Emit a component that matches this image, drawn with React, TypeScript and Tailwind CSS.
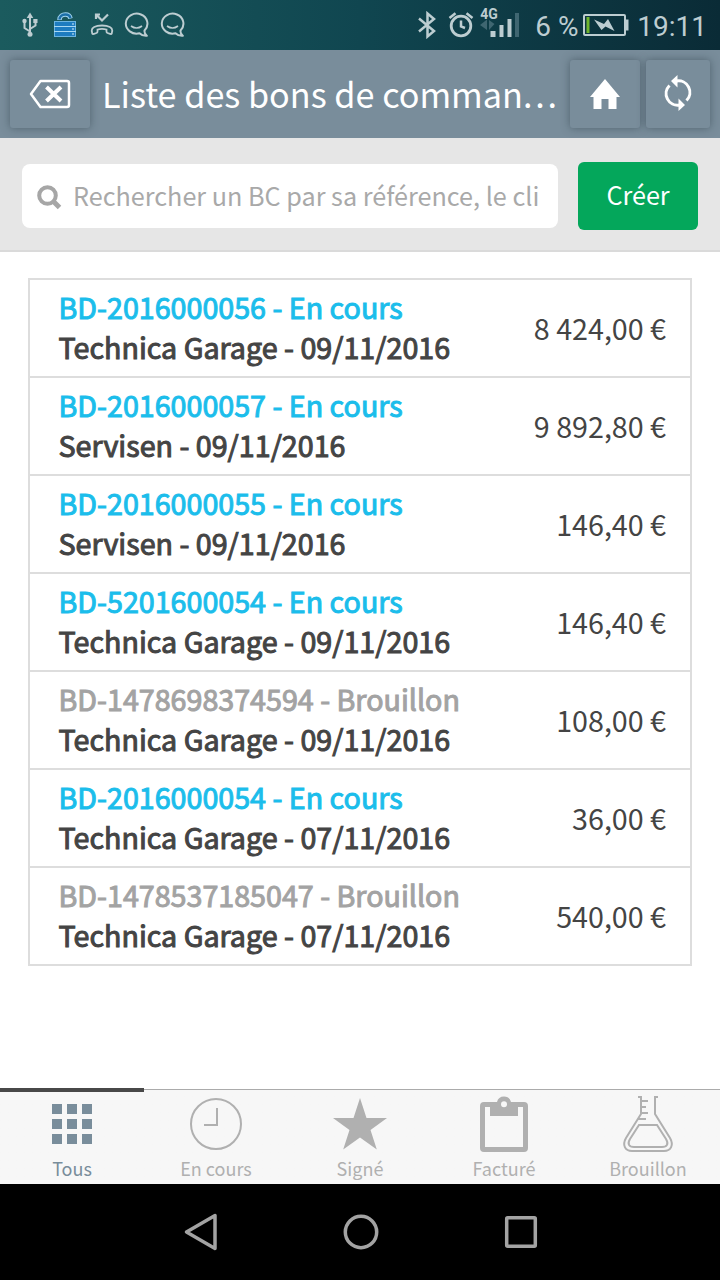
import { useState } from 'react';
import type { ReactNode } from 'react';

const orders = [
  { ref: 'BD-2016000056', status: 'En cours', client: 'Technica Garage', date: '09/11/2016', amount: '8 424,00 €' },
  { ref: 'BD-2016000057', status: 'En cours', client: 'Servisen', date: '09/11/2016', amount: '9 892,80 €' },
  { ref: 'BD-2016000055', status: 'En cours', client: 'Servisen', date: '09/11/2016', amount: '146,40 €' },
  { ref: 'BD-5201600054', status: 'En cours', client: 'Technica Garage', date: '09/11/2016', amount: '146,40 €' },
  { ref: 'BD-1478698374594', status: 'Brouillon', client: 'Technica Garage', date: '09/11/2016', amount: '108,00 €' },
  { ref: 'BD-2016000054', status: 'En cours', client: 'Technica Garage', date: '07/11/2016', amount: '36,00 €' },
  { ref: 'BD-1478537185047', status: 'Brouillon', client: 'Technica Garage', date: '07/11/2016', amount: '540,00 €' },
];

const ChatIcon = () => (
  <svg width="26" height="26" viewBox="0 0 26 26" fill="none" stroke="currentColor" strokeWidth="2">
    <path d="M15.500 21.300A10.800 10 0 1 1 20.500 18.500C20.300 20.500 21 22.300 22.800 23.800C20 24 17.500 23.300 15.500 21.300Z" strokeLinejoin="round" />
    <path d="M7 14Q12.500 18 18 14" strokeWidth="1.600" />
  </svg>
);

function StatusBar() {
  return (
    <div className="h-[50px] shrink-0 flex items-center justify-between pl-[22px] pr-[13px] bg-linear-to-r from-[#1b5b5e] via-[#104650] to-[#0a2b36] text-[#bdcdd1] font-['Roboto',sans-serif]">
      <div className="flex items-center gap-[10px]">
        <svg width="16" height="26" viewBox="0 0 16 26" fill="none" stroke="currentColor" strokeWidth="2">
          <path d="M8 3V22M8 19.500L2.500 16V10M8 17L13.500 13.500V9" />
          <path d="M8 0.500L11.300 6H4.700Z" fill="currentColor" stroke="none" />
          <circle cx="8" cy="22.300" r="2.500" fill="currentColor" stroke="none" />
          <circle cx="2.500" cy="9" r="2.200" fill="currentColor" stroke="none" />
          <path d="M11.300 7H15.500V11H11.300Z" fill="currentColor" stroke="none" />
        </svg>
        <svg className="ml-[5px]" width="24" height="26" viewBox="0 0 24 26" fill="none">
          <path d="M6.500 8C6.500 4 9.500 2.500 12.500 2.500C15 2.500 17 4 17.500 6.500" stroke="#9fd3ef" strokeWidth="4.500" />
          <path d="M6.500 7.600C6.500 4 9.500 2.500 12.500 2.500C15 2.500 17 4 17.400 6" stroke="#1c6fa8" strokeWidth="2.500" />
          <rect x="1.500" y="9.500" width="21" height="15" fill="#1d7cc0" stroke="#6cb4e0" />
          <path d="M1 14.500H23M1 19.500H23" stroke="#a8d8f2" strokeWidth="1.200" />
          <path d="M19 12H21M19 17H21M19 22H21" stroke="#d6edf8" />
        </svg>
        <svg className="ml-[3px]" width="24" height="26" viewBox="0 0 24 26" fill="none" stroke="currentColor" strokeWidth="2.200">
          <path d="M6 2.500L12 8.500L18 2.500M6 7V2.500H10" />
          <path d="M2 20C0.500 15.500 6 13.500 12 13.500S23.500 15.500 22 20C21.800 22.500 21.500 22.200 20 21.800L17.500 21C16 20.500 16.500 19 16.500 17.500C13.500 16.600 10.500 16.600 7.500 17.500C7.500 19 8 20.500 6.500 21L4 21.800C2.500 22.200 2.200 22.500 2 20Z" strokeWidth="1.800" />
        </svg>
        <ChatIcon />
        <ChatIcon />
      </div>

      <div className="flex items-center">
        <svg width="20" height="28" viewBox="0 0 20 28" fill="none" stroke="currentColor" strokeWidth="2.500">
          <path d="M2 7.500L17 20L10.500 25.500V2.500L17 8L2 20.500" />
        </svg>
        <svg className="ml-[11px]" width="26" height="28" viewBox="0 0 26 28" fill="none" stroke="currentColor">
          <circle cx="13" cy="15" r="9.800" strokeWidth="2.800" />
          <path d="M13 9.500V15.500L17 17M1.500 7L7.500 2.200M24.500 7L18.500 2.200" strokeWidth="2.500" />
        </svg>
        <div className="ml-[4px] mr-[2px] w-[42px] h-[34px] relative">
          <svg width="42" height="34" viewBox="0 0 42 34">
            <path d="M12.500 29H17.500V23H12.500ZM21.500 29H25.500V17H21.500ZM29.500 29H33.500V11H29.500Z" fill="currentColor" />
            <path d="M37 29H41V5H37Z" fill="#3f6671" />
            <path d="M2 17L9 11.500V22ZM11 12V22L16.500 16Z" fill="#3f6671" />
          </svg>
          <span className="absolute left-[2px] top-[-1px] text-[14px] leading-[14px] font-bold">4G</span>
        </div>
        <span className="ml-[13px] w-[48px] whitespace-nowrap text-[28px] leading-8 pt-[3px]">6 %</span>
        <svg width="46" height="24" viewBox="0 0 46 24" fill="none">
          <rect x="1" y="2" width="41" height="20" rx="1" stroke="currentColor" strokeWidth="2" />
          <path d="M43 6.500H45.500V17.500H43Z" fill="currentColor" />
          <path d="M3.500 4H6.500V20H3.500Z" fill="#6fb52c" />
          <path d="M11 6.500L21 11L25 6L31.500 18L22.500 13.500L18.500 17Z" fill="currentColor" />
        </svg>
        <span className="ml-[8px] text-[28px] leading-8 pt-[3px]">19:11</span>
      </div>
    </div>
  );
}

function HeaderButton({ className, children }: { className: string; children: ReactNode }) {
  return (
    <button className={`h-[68px] shrink-0 rounded-[3px] bg-[#798d9b] shadow-[0_0_9px_rgba(40,55,65,0.5)] flex items-center justify-center ${className}`}>
      {children}
    </button>
  );
}

function Header() {
  return (
    <header className="h-[88px] shrink-0 bg-[#798d9b] flex items-center px-[10px] text-white">
      <HeaderButton className="w-[80px]">
        <svg className="-mt-px" width="42" height="30" viewBox="0 0 42 30" fill="none" stroke="currentColor" strokeWidth="2.500">
          <path d="M11.500 2H38Q40 2 40 4V26Q40 28 38 28H11.500L2 15Z" strokeLinejoin="round" />
          <path d="M17.500 8L32 22M32 8L17.500 22" strokeWidth="4" />
        </svg>
      </HeaderButton>
      <h1 className="ml-[12px] flex-1 min-w-0 -mt-[2px] whitespace-nowrap text-[34.200px] leading-[68px]">
        Liste des bons de comman<span className="tracking-[2.800px]">...</span>
      </h1>
      <HeaderButton className="w-[70px]">
        <svg className="-mt-px" width="30" height="30" viewBox="0 0 30 30" fill="currentColor">
          <path d="M15 0L30 18H26.500V30H18.500V20H11.500V30H3.500V18H0Z" />
        </svg>
      </HeaderButton>
      <HeaderButton className="w-[64px] ml-[6px]">
        <svg className="-mt-[2px]" width="28" height="36" viewBox="0 0 28 36" fill="none" stroke="currentColor" strokeWidth="3">
          <path d="M5.500 10.500A11.500 11.500 0 0 0 15.500 30M22.500 25.500A11.500 11.500 0 0 0 12.500 6" />
          <path d="M13.500 0V12.500L7 6ZM14.500 23.500V36L21 30Z" fill="currentColor" stroke="none" />
        </svg>
      </HeaderButton>
    </header>
  );
}

const tabs = [
  {
    label: 'Tous',
    icon: (
      <svg width="56" height="56" viewBox="0 0 56 56" fill="currentColor">
        <path d="M8 8h10v10H8zM23 8h10v10H23zM38 8h10v10H38zM8 23h10v10H8zM23 23h10v10H23zM38 23h10v10H38zM8 38h10v10H8zM23 38h10v10H23zM38 38h10v10H38z" />
      </svg>
    ),
  },
  {
    label: 'En cours',
    icon: (
      <svg width="56" height="56" viewBox="0 0 56 56" fill="none" stroke="currentColor" strokeWidth="2">
        <circle cx="28" cy="28" r="25" />
        <path d="M29 12V29H16" />
      </svg>
    ),
  },
  {
    label: 'Signé',
    icon: (
      <svg width="56" height="56" viewBox="0 0 56 56" fill="currentColor">
        <path d="M28 2L34.500 22H55L38.500 34L44.800 53.500L28 41.500L11.200 53.500L17.500 34L1 22H21.500Z" />
      </svg>
    ),
  },
  {
    label: 'Facturé',
    icon: (
      <svg width="56" height="56" viewBox="0 0 56 56" fill="currentColor">
        <path fillRule="evenodd" d="M8 6H21A7.200 7.200 0 0 1 35 6H48Q52 6 52 10V52Q52 56 48 56H8Q4 56 4 52V10Q4 6 8 6ZM9 11V51H47V11H42V20H14V11ZM28 5.200A3 3 0 1 0 28 11.200A3 3 0 1 0 28 5.200Z" />
      </svg>
    ),
  },
  {
    label: 'Brouillon',
    icon: (
      <svg width="56" height="56" viewBox="0 0 56 56" fill="none" stroke="currentColor" strokeWidth="2">
        <path d="M18 1H21V18L6 42C2 49 5 55 12 55H44C51 55 54 49 50 42L35 18V1H38" />
        <path d="M21 5H28M21 11H26M21 17H28M18 23H26" />
        <path d="M19 29H37L46 43C49 48 47 51 42 51H14C9 51 7 48 10 43Z" />
      </svg>
    ),
  },
];

export default function App() {
  const [activeTab, setActiveTab] = useState('Tous');

  return (
    <div className="w-[720px] h-[1280px] overflow-hidden flex flex-col bg-white font-['Noto_Sans_CJK_SC',sans-serif]">
      <StatusBar />
      <Header />

      {/* Search */}
      <div className="h-[114px] shrink-0 bg-[#e6e6e6] border-b-2 border-[#dadada] flex items-center px-[22px] pt-[4px]">
        <div className="w-[536px] h-[64px] bg-white rounded-lg flex items-center pl-[15px] pr-[16px]">
          <svg className="shrink-0 mt-[3px]" width="25" height="25" viewBox="0 0 25 25" fill="none" stroke="#a6a6a6">
            <circle cx="10.500" cy="10.500" r="8.300" strokeWidth="4" />
            <path d="M16 16L22.500 22.500" strokeWidth="5" />
          </svg>
          <input
            className="ml-[11px] flex-1 min-w-0 h-[60px] pb-[3px] text-[25.200px] outline-none placeholder:text-[#a9a9a9]"
            placeholder="Rechercher un BC par sa référence, le cli"
          />
        </div>
        <button className="ml-[20px] w-[120px] h-[68px] pb-[2px] rounded-[6px] bg-[#04a75b] text-white text-[25.200px]">Créer</button>
      </div>

      {/* Orders */}
      <main className="flex-1 px-[28px] pt-[26px]">
        <ul className="border-2 border-b-0 border-[#dddddd]">
          {orders.map((order) => (
            <li key={order.ref} className="h-[98px] border-b-2 border-[#dddddd] pl-[28.500px] pr-[24px] flex items-center justify-between text-[28.660px] leading-[40px] text-[#444444]">
              <div className="-mt-[2px] [-webkit-text-stroke:1px]">
                <p className={order.status === 'Brouillon' ? 'text-[#a3a3a3]' : 'text-[#1bbdeb]'}>
                  {order.ref} - {order.status}
                </p>
                <p>{order.client} - {order.date}</p>
              </div>
              <span>{order.amount}</span>
            </li>
          ))}
        </ul>
      </main>

      {/* Tabs */}
      <nav className="h-[96px] shrink-0 flex bg-linear-to-b from-white from-[1px] to-[#f7f7f7] to-[1px]">
        {tabs.map((tab) => {
          const active = tab.label === activeTab;
          return (
            <button
              key={tab.label}
              onClick={() => setActiveTab(tab.label)}
              className={`w-[144px] flex flex-col items-center ${active ? 'border-t-4 border-[#484848] pt-[4px] text-[#798d9b]' : 'mt-px border-t border-t-[#ababab] pt-[6px] text-[#b0b0b0]'}`}
            >
              {tab.icon}
              <span className="text-[18px] leading-[24px] mt-[4px]">{tab.label}</span>
            </button>
          );
        })}
      </nav>

      {/* Android navigation */}
      <div className="h-[96px] shrink-0 bg-black flex items-center pl-[183px] gap-[124px] text-[#a3a3a3]">
        <svg width="36" height="38" viewBox="0 0 36 38" fill="none" stroke="currentColor" strokeWidth="3.500">
          <path d="M32 2.500V35.500L3.500 19Z" strokeLinejoin="round" />
        </svg>
        <svg width="36" height="36" viewBox="0 0 36 36" fill="none" stroke="currentColor" strokeWidth="3.500">
          <circle cx="18" cy="18" r="15.700" />
        </svg>
        <svg width="36" height="36" viewBox="0 0 36 36" fill="none" stroke="currentColor" strokeWidth="3.500">
          <rect x="3.700" y="3.700" width="28.600" height="28.600" rx="1" />
        </svg>
      </div>
    </div>
  );
}
